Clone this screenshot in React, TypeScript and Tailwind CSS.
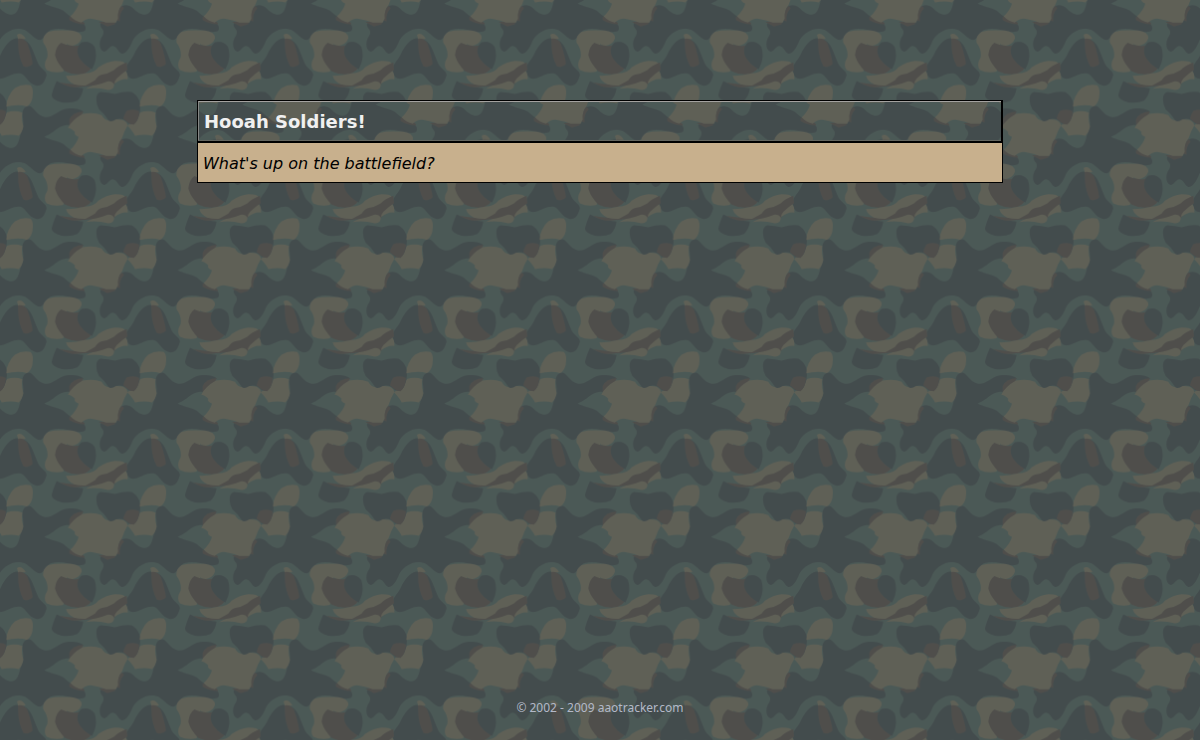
import { useId } from 'react';

const GREEN = '#4b5956';
const DARK = '#434c4d';
const KHAKI = '#5f6056';
const BROWN = '#4f4e4b';

interface Patch {
  fill: string;
  d: string;
}

// One camouflage tile is 400 x 400 units, patches may run over its edges
const PATCHES: Patch[] = [
  { fill: DARK, d: 'M488 148C500 150 510 175 530 180C555 188 570 162 600 156C620 153 645 157 650 166L610 205C590 204 575 212 560 225C550 232 542 236 533 240C550 250 575 252 590 262C605 275 620 288 640 295C655 300 660 312 655 322C645 330 625 325 605 320C580 315 555 315 545 325C530 335 535 345 520 350C505 350 490 328 475 320C455 313 440 316 425 325C410 333 400 345 395 360C388 375 378 392 365 391C355 388 352 370 338 368C328 368 322 385 312 385C298 380 296 360 303 345C310 335 315 325 305 315C298 305 300 298 310 298C325 303 335 300 347 296C352 290 350 270 358 255C368 243 385 242 400 255C412 268 430 278 443 272C458 262 458 240 464 225C472 210 470 195 468 180C464 160 475 148 488 148Z' },
  { fill: DARK, d: 'M448 345C428 350 415 368 402 393C395 410 375 425 378 442C382 458 385 468 405 466C425 460 440 448 460 450C480 454 480 480 510 487C530 488 535 470 540 455C538 440 525 440 515 422C505 400 500 380 490 365C480 350 465 343 448 345Z' },
  { fill: KHAKI, d: 'M51 334Q64 325 77 346L55 349Z' },
  { fill: BROWN, d: 'M54 346Q72 343 82 360Q94 392 98 422Q88 436 70 428Q58 405 55 375Z' },
  { fill: KHAKI, d: 'M145 325Q170 319 215 322Q245 326 245 345Q238 366 212 368L200 362L190 445Q160 450 140 440Q128 425 142 402Q146 380 130 358Q126 338 145 325Z' },
  { fill: BROWN, d: 'M183 358Q205 370 232 367Q280 360 286 400Q280 440 255 450Q225 458 195 444Q170 418 165 395Q167 370 183 358Z' },
  { fill: DARK, d: 'M245 357Q268 350 284 370Q292 395 284 420L276 438Q232 412 232 382Q234 364 245 357Z' },
  { fill: DARK, d: 'M170 473Q200 490 250 495Q246 520 232 532Q215 540 185 537Q155 530 155 516Q158 500 170 473Z' },
  { fill: BROWN, d: 'M180 477Q205 484 262 484L285 480Q240 497 210 490Q190 485 180 477Z' },
  { fill: KHAKI, d: 'M198 457Q225 458 255 450Q284 449 295 432Q320 416 345 413Q376 413 374 422L325 458L278 484Q248 490 222 483Q202 474 198 457Z' },
  { fill: KHAKI, d: 'M258 496Q290 480 330 472L360 452L376 442Q384 450 383 468Q366 464 342 482Q344 498 325 500Q290 490 258 496Z' },
  { fill: BROWN, d: 'M380 417Q355 427 342 440Q324 451 306 454Q293 458 285 471L250 490Q290 488 324 474Q336 473 344 484Q342 474 350 466Q368 448 382 440Z' },
  { fill: KHAKI, d: 'M45 94Q68 80 92 86Q102 97 97 125Q91 145 80 149Q60 143 35 147L19 150Q18 136 26 120Q34 103 45 94Z' },
  { fill: KHAKI, d: 'M421 167Q445 160 467 168Q463 185 470 210Q466 230 456 237Q435 232 405 237Q397 222 382 207Q410 190 421 167Z' },
  { fill: BROWN, d: 'M208 188Q220 165 250 165L243 180L208 208Z' },
  { fill: BROWN, d: 'M208 280L240 291Q256 297 254 303Q228 302 208 290Z' },
  { fill: BROWN, d: 'M296 296L350 290L344 303L322 310Z' },
  { fill: BROWN, d: 'M352 292Q349 262 366 247L372 255Q356 270 360 294Z' },
  { fill: KHAKI, d: 'M248 172Q280 166 305 175Q313 190 327 192Q345 186 370 190Q384 198 382 208Q372 224 366 244Q351 262 354 286L348 298Q340 298 318 298Q303 291 280 287Q262 282 244 298Q225 293 211 279Q230 262 236 241Q220 233 225 226Q213 214 204 214Q216 190 248 172Z' },
  { fill: DARK, d: 'M302 106Q325 107 345 112Q372 103 395 106Q416 118 421 142Q422 170 412 190Q404 207 385 200Q370 183 348 188Q332 199 325 190Q312 170 297 158Q286 140 290 118Q294 107 302 106Z' },
  { fill: BROWN, d: 'M380 163Q402 155 418 164Q416 190 402 204Q388 204 370 186Q372 174 380 163Z' },
];

const SHIFTS = [-400, 0, 400];

function Camouflage() {
  const id = useId();
  return (
    <svg className="absolute inset-0 -z-10 h-full w-full" aria-hidden="true">
      <defs>
        <g id={`${id}-patches`}>
          {PATCHES.map((patch) => (
            <path key={patch.d} d={patch.d} fill={patch.fill} />
          ))}
        </g>
        <pattern
          id={`${id}-tile`}
          width="400"
          height="400"
          patternUnits="userSpaceOnUse"
          patternTransform="scale(0.33333) translate(0 170)"
        >
          <rect width="400" height="400" fill={GREEN} />
          {SHIFTS.map((y) =>
            SHIFTS.map((x) => <use key={`${x},${y}`} href={`#${id}-patches`} x={x} y={y} />)
          )}
        </pattern>
      </defs>
      <rect width="100%" height="100%" fill={`url(#${id}-tile)`} />
    </svg>
  );
}

export default function App() {
  return (
    <div className="relative isolate flex min-h-screen flex-col items-center overflow-hidden">
      <Camouflage />

      <main className="mt-[100px] w-full max-w-[806px] border border-black bg-[#c8b08d] font-['DejaVu_Sans',sans-serif]">
        <header className="relative isolate border-r border-b-2 border-black">
          <Camouflage />
          <h1 className="border-t border-b border-l border-t-[#a3a19f] border-b-[#63655f] border-l-[#858684] px-[5px] pt-[7px] pb-[6px] text-[18px] leading-[25px] font-bold text-[#f0f0f0]">
            Hooah Soldiers!
          </h1>
        </header>
        <p className="px-[5px] pt-[9px] pb-[7px] text-[16px] leading-[23px] text-black italic">
          What's up on the battlefield?
        </p>
      </main>

      <footer className="mt-auto pb-[23px] font-['Noto_Sans',sans-serif] text-[12px] leading-[18px] text-[#b3b9c8]">
        © 2002 - 2009 aaotracker.com
      </footer>
    </div>
  );
}
